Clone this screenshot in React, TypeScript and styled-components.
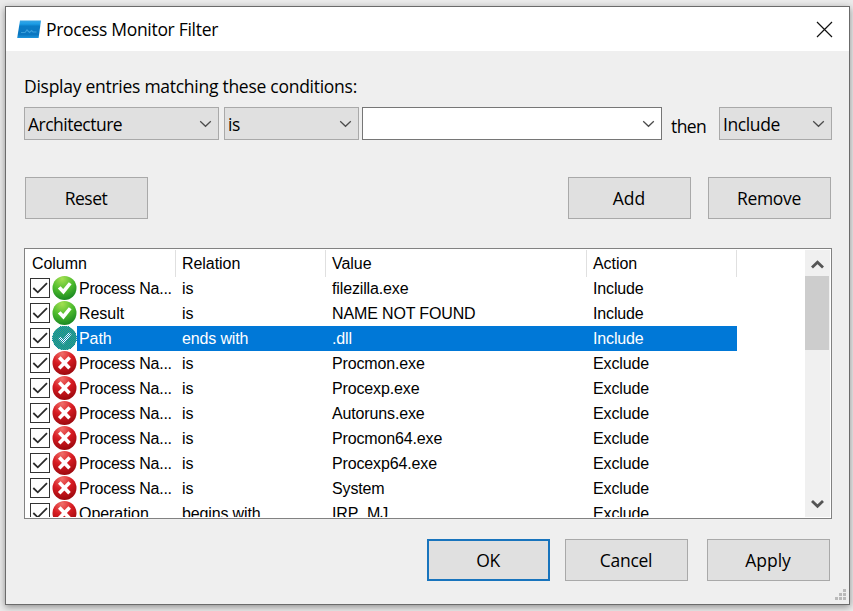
import React from "react";
import styled, { createGlobalStyle, css } from "styled-components";

const GlobalStyle = createGlobalStyle`
  * { box-sizing: border-box; }
  body {
    margin: 0;
    overflow: hidden;
    background: #ebebeb;
    color: #000;
  }
`;

const uiFont = css`
  font-family: "Open Sans", "Noto Sans", sans-serif;
  font-size: 17.5px;
  line-height: 24px;
  white-space: nowrap;
`;

const Desktop = styled.div`
  width: 853px;
  height: 611px;
  padding: 6px 0 0 5px;
  overflow: hidden;
`;

const Dialog = styled.main`
  display: flex;
  flex-direction: column;
  width: 845px;
  height: 599px;
  border: 1px solid #6b6b6b;
  background: #efefef;
  box-shadow: 0 2px 7px rgba(0, 0, 0, 0.4);
`;

const TitleBar = styled.header`
  display: flex;
  align-items: center;
  height: 44px;
  flex: none;
  padding: 0 16px 0 11px;
  background: #fff;
`;

const Title = styled.h1`
  ${uiFont}
  flex: 1;
  margin: 0 0 0 5px;
  font-weight: 400;
  letter-spacing: -0.3px;
`;

const Text = styled.span<{ $track?: number }>`
  ${uiFont}
  letter-spacing: ${(p) => p.$track ?? 0}px;
`;

const CloseButton = styled.button`
  display: flex;
  padding: 0;
  border: 0;
  background: none;
`;

const Body = styled.div`
  display: flex;
  flex-direction: column;
  flex: 1;
  padding: 23px 17px 0 18px;
`;

const Conditions = styled.div`
  display: flex;
  height: 33px;
  margin-top: 9px;
`;

const Combo = styled.div<{ $width: number; $gap?: number; $editable?: boolean }>`
  display: flex;
  align-items: center;
  justify-content: space-between;
  width: ${(p) => p.$width}px;
  height: 33px;
  margin-right: ${(p) => p.$gap ?? 0}px;
  padding: 0 6px 0 3px;
  border: 1px solid ${(p) => (p.$editable ? "#767676" : "#a9a9a9")};
  background: ${(p) => (p.$editable ? "#fff" : "#e0e0e0")};
`;

const Then = styled.div`
  width: 48px;
  padding-top: 7px;
`;

const ButtonRow = styled.div<{ $top: number }>`
  display: flex;
  height: 42px;
  margin: ${(p) => p.$top}px 1px 0 1px;
`;

const PushButton = styled.button<{ $default?: boolean; $left?: number; $track?: number }>`
  ${uiFont}
  width: 123px;
  height: 42px;
  margin-left: ${(p) => p.$left ?? 0}px;
  padding: 0 1px 0 0;
  color: #000;
  letter-spacing: ${(p) => p.$track ?? 0}px;
  background: #e0e0e0;
  border: ${(p) => (p.$default ? "2px solid #1874bd" : "1px solid #a9a9a9")};
`;

const ListView = styled.section`
  display: flex;
  width: 808px;
  height: 271px;
  margin-top: 29px;
  padding: 1px 1px 1px 0;
  border: 1px solid #828282;
  background: #fff;
  font: 16px/25px "Liberation Sans", Arial, sans-serif;
  letter-spacing: -0.14px;
  white-space: nowrap;
`;

const ListContent = styled.div`
  flex: 1;
  overflow: hidden;
`;

const columns = css`
  display: grid;
  grid-template-columns: 151px 150px 261px 150px;
`;

const ListHeader = styled.div`
  ${columns}
  height: 26px;
`;

const HeaderCell = styled.div`
  padding-left: 6px;
  line-height: 27px;
  letter-spacing: -0.05px;
  border-right: 1px solid #e0e0e0;

  &:first-child { padding-left: 7px; }
`;

const Row = styled.div<{ $selected: boolean }>`
  ${columns}
  height: 25px;
  color: ${(p) => (p.$selected ? "#fff" : "#000")};
  background: ${(p) =>
    p.$selected ? "linear-gradient(#0078d7, #0078d7) 52px 0 / 660px 25px no-repeat" : "none"};
`;

const Cell = styled.div`
  padding-left: 6px;
`;

const FirstCell = styled.div`
  display: flex;
  align-items: flex-start;
  padding-left: 5px;
`;

const Checkbox = styled.span`
  display: flex;
  width: 20px;
  height: 20px;
  margin: 2px 2px 0 0;
  border: 1px solid #333;
  background: #fff;
`;

const Name = styled.span<{ $track: number }>`
  margin-left: 2px;
  letter-spacing: ${(p) => p.$track}px;
`;

const ScrollBar = styled.div`
  display: flex;
  flex-direction: column;
  justify-content: space-between;
  width: 25px;
  background: #f0f0f0;
`;

const ScrollArrow = styled.div`
  display: flex;
  justify-content: center;
  align-items: center;
  height: 27px;
`;

const Thumb = styled.div`
  width: 24px;
  height: 74px;
  margin: -1px 0 auto;
  background: #cdcdcd;
`;

const Grip = styled.svg`
  align-self: flex-end;
  margin: 8px -14px 0 0;
`;

const AppIcon = () => (
  <svg width="24" height="19" viewBox="0 0 24 19">
    <defs>
      <linearGradient id="app" x1="0" y1="0" x2="0" y2="1">
        <stop offset="0" stopColor="#3aa6e4" />
        <stop offset="0.2" stopColor="#1a9ce6" />
        <stop offset="0.32" stopColor="#0a7cc6" />
        <stop offset="0.8" stopColor="#0a76c0" />
        <stop offset="1" stopColor="#1c94dc" />
      </linearGradient>
    </defs>
    <path d="M3 .5H24L21.6 18H.2Z" fill="url(#app)" />
    <path d="M4 12.5h4l2-2.5 2.5 2.5 2-2 1.5 1.5h3.5" fill="none" stroke="#3a9fdb" strokeWidth="1.2" />
  </svg>
);

const CloseIcon = () => (
  <svg width="17" height="17" viewBox="0 0 17 17">
    <path d="M1 1 16 16M16 1 1 16" stroke="#111" strokeWidth="1.2" />
  </svg>
);

const Chevron = () => (
  <svg width="13" height="8" viewBox="0 0 13 8">
    <path d="M1.2 1.2 6.5 6.3 11.8 1.2" fill="none" stroke="#4b4b4b" strokeWidth="1.25" />
  </svg>
);

const ScrollChevron = ({ down = false }: { down?: boolean }) => (
  <svg width="13" height="11" viewBox="0 0 13 11">
    <path
      d={down ? "M1 3 6.5 8.3 12 3" : "M1 9.5 6.5 4.2 12 9.5"}
      fill="none"
      stroke="#555"
      strokeWidth="2.8"
    />
  </svg>
);

const CheckMark = () => (
  <svg width="18" height="18" viewBox="0 0 18 18">
    <path d="M2.3 9 6.8 13.3 16 4.2" fill="none" stroke="#2b2b2b" strokeWidth="1.8" />
  </svg>
);

const StatusIcon = ({ include, selected }: { include: boolean; selected: boolean }) => (
  <svg width="25" height="25" viewBox="0 0 25 25">
    <defs>
      <radialGradient id="green" cx="0.4" cy="0.12" r="0.95">
        <stop offset="0" stopColor="#a4e052" />
        <stop offset="0.5" stopColor="#4dbb2c" />
        <stop offset="1" stopColor="#128020" />
      </radialGradient>
      <radialGradient id="red" cx="0.4" cy="0.12" r="0.95">
        <stop offset="0" stopColor="#f0706a" />
        <stop offset="0.45" stopColor="#d81c22" />
        <stop offset="1" stopColor="#93060b" />
      </radialGradient>
      <pattern id="dither" width="2" height="2" patternUnits="userSpaceOnUse">
        <path d="M0 0h1v1H0zM1 1h1v1H1z" fill="#0e86a6" />
      </pattern>
    </defs>
    <circle cx="12.5" cy="12" r="12" fill={selected ? "#36a878" : include ? "url(#green)" : "url(#red)"} />
    {include ? (
      <path d="M5.8 12.6 8.6 10.3 11.2 13 16.8 6.2 19.6 8.3 11.5 18.6Z" fill="#fff" />
    ) : (
      <path d="M7.3 6.5 17.5 17.3M17.7 6.5 7.2 17.3" stroke="#fff" strokeWidth="3.6" />
    )}
    {selected && <circle cx="12.5" cy="12" r="12.3" fill="url(#dither)" shapeRendering="crispEdges" />}
  </svg>
);

const filters = [
  ["Process Na...", "is", "filezilla.exe", "Include"],
  ["Result", "is", "NAME NOT FOUND", "Include"],
  ["Path", "ends with", ".dll", "Include"],
  ["Process Na...", "is", "Procmon.exe", "Exclude"],
  ["Process Na...", "is", "Procexp.exe", "Exclude"],
  ["Process Na...", "is", "Autoruns.exe", "Exclude"],
  ["Process Na...", "is", "Procmon64.exe", "Exclude"],
  ["Process Na...", "is", "Procexp64.exe", "Exclude"],
  ["Process Na...", "is", "System", "Exclude"],
  ["Operation", "begins with", "IRP_MJ_", "Exclude"],
];

const gripDots = [[8, 0], [4, 4], [8, 4], [0, 8], [4, 8], [8, 8]];

export default function App() {
  return (
    <Desktop>
      <GlobalStyle />
      <Dialog>
        <TitleBar>
          <AppIcon />
          <Title>Process Monitor Filter</Title>
          <CloseButton aria-label="Close"><CloseIcon /></CloseButton>
        </TitleBar>
        <Body>
          <Text $track={-0.27}>Display entries matching these conditions:</Text>
          <Conditions>
            <Combo $width={195} $gap={5}><Text $track={-0.5}>Architecture</Text><Chevron /></Combo>
            <Combo $width={135} $gap={3}><Text $track={-0.3}>is</Text><Chevron /></Combo>
            <Combo $width={300} $gap={9} $editable><Text /><Chevron /></Combo>
            <Then><Text $track={-0.6}>then</Text></Then>
            <Combo $width={113}><Text $track={-0.4}>Include</Text><Chevron /></Combo>
          </Conditions>
          <ButtonRow $top={37}>
            <PushButton $track={-0.5}>Reset</PushButton>
            <PushButton $left={420}>Add</PushButton>
            <PushButton $left={17} $track={-0.3}>Remove</PushButton>
          </ButtonRow>
          <ListView>
            <ListContent>
              <ListHeader>
                {["Column", "Relation", "Value", "Action"].map((name) => (
                  <HeaderCell key={name}>{name}</HeaderCell>
                ))}
              </ListHeader>
              {filters.map(([name, relation, value, action], i) => (
                <Row key={i} $selected={i === 2}>
                  <FirstCell>
                    <Checkbox><CheckMark /></Checkbox>
                    <StatusIcon include={action === "Include"} selected={i === 2} />
                    <Name $track={name.endsWith("...") ? -0.25 : -0.05}>{name}</Name>
                  </FirstCell>
                  <Cell>{relation}</Cell>
                  <Cell>{value}</Cell>
                  <Cell>{action}</Cell>
                </Row>
              ))}
            </ListContent>
            <ScrollBar>
              <ScrollArrow><ScrollChevron /></ScrollArrow>
              <Thumb />
              <ScrollArrow><ScrollChevron down /></ScrollArrow>
            </ScrollBar>
          </ListView>
          <ButtonRow $top={20}>
            <PushButton $default $left={402} $track={-0.4}>OK</PushButton>
            <PushButton $left={15} $track={-0.3}>Cancel</PushButton>
            <PushButton $left={19}>Apply</PushButton>
          </ButtonRow>
          <Grip width="11" height="11" viewBox="0 0 11 11">
            {gripDots.map(([x, y]) => (
              <rect key={`${x}-${y}`} x={x} y={y} width="3" height="3" fill="#bababa" />
            ))}
          </Grip>
        </Body>
      </Dialog>
    </Desktop>
  );
}
